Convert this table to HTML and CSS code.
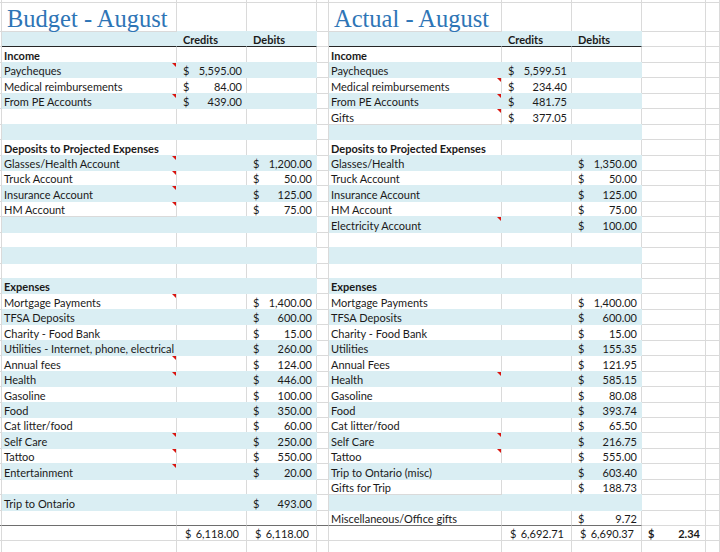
FILE: index.html
```html
<!DOCTYPE html>
<html>
<head>
<meta charset="utf-8">
<title>Budget - August</title>
<link rel="stylesheet" href="styles.css">
</head>
<body>
<div class="sheet">
  <div class="row top"><div class="c"></div><div class="c"></div><div class="c"></div><div class="c"></div><div class="c"></div><div class="c"></div><div class="c"></div><div class="c"></div><div class="c"></div><div class="c"></div></div>
  <div class="row ttl"><div class="c"></div><div class="c title">Budget - August</div><div class="c"></div><div class="c"></div><div class="c"></div><div class="c title">Actual - August</div><div class="c"></div><div class="c"></div><div class="c"></div><div class="c"></div></div>

  <div class="row band hdr"><div class="c"></div><div class="c"></div><div class="c hd">Credits</div><div class="c hd">Debits</div><div class="c"></div><div class="c"></div><div class="c hd">Credits</div><div class="c hd">Debits</div><div class="c"></div><div class="c"></div></div>
  <div class="row"><div class="c"></div><div class="c lab bold">Income</div><div class="c"></div><div class="c"></div><div class="c"></div><div class="c lab bold">Income</div><div class="c"></div><div class="c"></div><div class="c"></div><div class="c"></div></div>
  <div class="row band"><div class="c"></div><div class="c lab note">Paycheques</div><div class="c num"><span>$</span><span>5,595.00</span></div><div class="c"></div><div class="c"></div><div class="c lab">Paycheques</div><div class="c num"><span>$</span><span>5,599.51</span></div><div class="c"></div><div class="c"></div><div class="c"></div></div>
  <div class="row"><div class="c"></div><div class="c lab">Medical reimbursements</div><div class="c num"><span>$</span><span>84.00</span></div><div class="c"></div><div class="c"></div><div class="c lab note">Medical reimbursements</div><div class="c num"><span>$</span><span>234.40</span></div><div class="c"></div><div class="c"></div><div class="c"></div></div>
  <div class="row band"><div class="c"></div><div class="c lab note">From PE Accounts</div><div class="c num"><span>$</span><span>439.00</span></div><div class="c"></div><div class="c"></div><div class="c lab note">From PE Accounts</div><div class="c num"><span>$</span><span>481.75</span></div><div class="c"></div><div class="c"></div><div class="c"></div></div>
  <div class="row"><div class="c"></div><div class="c"></div><div class="c"></div><div class="c"></div><div class="c"></div><div class="c lab note">Gifts</div><div class="c num"><span>$</span><span>377.05</span></div><div class="c"></div><div class="c"></div><div class="c"></div></div>
  <div class="row band"><div class="c"></div><div class="c"></div><div class="c"></div><div class="c"></div><div class="c"></div><div class="c"></div><div class="c"></div><div class="c"></div><div class="c"></div><div class="c"></div></div>

  <div class="row"><div class="c"></div><div class="c lab bold">Deposits to Projected Expenses</div><div class="c"></div><div class="c"></div><div class="c"></div><div class="c lab bold">Deposits to Projected Expenses</div><div class="c"></div><div class="c"></div><div class="c"></div><div class="c"></div></div>
  <div class="row band"><div class="c"></div><div class="c lab note">Glasses/Health Account</div><div class="c"></div><div class="c num"><span>$</span><span>1,200.00</span></div><div class="c"></div><div class="c lab">Glasses/Health</div><div class="c"></div><div class="c num"><span>$</span><span>1,350.00</span></div><div class="c"></div><div class="c"></div></div>
  <div class="row"><div class="c"></div><div class="c lab note">Truck Account</div><div class="c"></div><div class="c num"><span>$</span><span>50.00</span></div><div class="c"></div><div class="c lab">Truck Account</div><div class="c"></div><div class="c num"><span>$</span><span>50.00</span></div><div class="c"></div><div class="c"></div></div>
  <div class="row band"><div class="c"></div><div class="c lab note">Insurance Account</div><div class="c"></div><div class="c num"><span>$</span><span>125.00</span></div><div class="c"></div><div class="c lab">Insurance Account</div><div class="c"></div><div class="c num"><span>$</span><span>125.00</span></div><div class="c"></div><div class="c"></div></div>
  <div class="row"><div class="c"></div><div class="c lab note">HM Account</div><div class="c"></div><div class="c num"><span>$</span><span>75.00</span></div><div class="c"></div><div class="c lab">HM Account</div><div class="c"></div><div class="c num"><span>$</span><span>75.00</span></div><div class="c"></div><div class="c"></div></div>
  <div class="row band"><div class="c"></div><div class="c"></div><div class="c"></div><div class="c"></div><div class="c"></div><div class="c lab note">Electricity Account</div><div class="c"></div><div class="c num"><span>$</span><span>100.00</span></div><div class="c"></div><div class="c"></div></div>
  <div class="row"><div class="c"></div><div class="c"></div><div class="c"></div><div class="c"></div><div class="c"></div><div class="c"></div><div class="c"></div><div class="c"></div><div class="c"></div><div class="c"></div></div>
  <div class="row band"><div class="c"></div><div class="c"></div><div class="c"></div><div class="c"></div><div class="c"></div><div class="c"></div><div class="c"></div><div class="c"></div><div class="c"></div><div class="c"></div></div>
  <div class="row"><div class="c"></div><div class="c"></div><div class="c"></div><div class="c"></div><div class="c"></div><div class="c"></div><div class="c"></div><div class="c"></div><div class="c"></div><div class="c"></div></div>

  <div class="row band"><div class="c"></div><div class="c lab bold">Expenses</div><div class="c"></div><div class="c"></div><div class="c"></div><div class="c lab bold">Expenses</div><div class="c"></div><div class="c"></div><div class="c"></div><div class="c"></div></div>
  <div class="row"><div class="c"></div><div class="c lab note">Mortgage Payments</div><div class="c"></div><div class="c num"><span>$</span><span>1,400.00</span></div><div class="c"></div><div class="c lab">Mortgage Payments</div><div class="c"></div><div class="c num"><span>$</span><span>1,400.00</span></div><div class="c"></div><div class="c"></div></div>
  <div class="row band"><div class="c"></div><div class="c lab">TFSA Deposits</div><div class="c"></div><div class="c num"><span>$</span><span>600.00</span></div><div class="c"></div><div class="c lab">TFSA Deposits</div><div class="c"></div><div class="c num"><span>$</span><span>600.00</span></div><div class="c"></div><div class="c"></div></div>
  <div class="row"><div class="c"></div><div class="c lab">Charity - Food Bank</div><div class="c"></div><div class="c num"><span>$</span><span>15.00</span></div><div class="c"></div><div class="c lab">Charity - Food Bank</div><div class="c"></div><div class="c num"><span>$</span><span>15.00</span></div><div class="c"></div><div class="c"></div></div>
  <div class="row band"><div class="c"></div><div class="c lab">Utilities - Internet, phone, electrical</div><div class="c"></div><div class="c num"><span>$</span><span>260.00</span></div><div class="c"></div><div class="c lab">Utilities</div><div class="c"></div><div class="c num"><span>$</span><span>155.35</span></div><div class="c"></div><div class="c"></div></div>
  <div class="row"><div class="c"></div><div class="c lab note">Annual fees</div><div class="c"></div><div class="c num"><span>$</span><span>124.00</span></div><div class="c"></div><div class="c lab">Annual Fees</div><div class="c"></div><div class="c num"><span>$</span><span>121.95</span></div><div class="c"></div><div class="c"></div></div>
  <div class="row band"><div class="c"></div><div class="c lab note">Health</div><div class="c"></div><div class="c num"><span>$</span><span>446.00</span></div><div class="c"></div><div class="c lab note">Health</div><div class="c"></div><div class="c num"><span>$</span><span>585.15</span></div><div class="c"></div><div class="c"></div></div>
  <div class="row"><div class="c"></div><div class="c lab">Gasoline</div><div class="c"></div><div class="c num"><span>$</span><span>100.00</span></div><div class="c"></div><div class="c lab">Gasoline</div><div class="c"></div><div class="c num"><span>$</span><span>80.08</span></div><div class="c"></div><div class="c"></div></div>
  <div class="row band"><div class="c"></div><div class="c lab">Food</div><div class="c"></div><div class="c num"><span>$</span><span>350.00</span></div><div class="c"></div><div class="c lab">Food</div><div class="c"></div><div class="c num"><span>$</span><span>393.74</span></div><div class="c"></div><div class="c"></div></div>
  <div class="row"><div class="c"></div><div class="c lab">Cat litter/food</div><div class="c"></div><div class="c num"><span>$</span><span>60.00</span></div><div class="c"></div><div class="c lab">Cat litter/food</div><div class="c"></div><div class="c num"><span>$</span><span>65.50</span></div><div class="c"></div><div class="c"></div></div>
  <div class="row band"><div class="c"></div><div class="c lab note">Self Care</div><div class="c"></div><div class="c num"><span>$</span><span>250.00</span></div><div class="c"></div><div class="c lab note">Self Care</div><div class="c"></div><div class="c num"><span>$</span><span>216.75</span></div><div class="c"></div><div class="c"></div></div>
  <div class="row"><div class="c"></div><div class="c lab note">Tattoo</div><div class="c"></div><div class="c num"><span>$</span><span>550.00</span></div><div class="c"></div><div class="c lab note">Tattoo</div><div class="c"></div><div class="c num"><span>$</span><span>555.00</span></div><div class="c"></div><div class="c"></div></div>
  <div class="row band"><div class="c"></div><div class="c lab note">Entertainment</div><div class="c"></div><div class="c num"><span>$</span><span>20.00</span></div><div class="c"></div><div class="c lab">Trip to Ontario (misc)</div><div class="c"></div><div class="c num"><span>$</span><span>603.40</span></div><div class="c"></div><div class="c"></div></div>
  <div class="row"><div class="c"></div><div class="c"></div><div class="c"></div><div class="c"></div><div class="c"></div><div class="c lab">Gifts for Trip</div><div class="c"></div><div class="c num"><span>$</span><span>188.73</span></div><div class="c"></div><div class="c"></div></div>
  <div class="row band"><div class="c"></div><div class="c lab">Trip to Ontario</div><div class="c"></div><div class="c num"><span>$</span><span>493.00</span></div><div class="c"></div><div class="c"></div><div class="c"></div><div class="c"></div><div class="c"></div><div class="c"></div></div>
  <div class="row last"><div class="c"></div><div class="c"></div><div class="c"></div><div class="c"></div><div class="c"></div><div class="c lab">Miscellaneous/Office gifts</div><div class="c"></div><div class="c num"><span>$</span><span>9.72</span></div><div class="c"></div><div class="c"></div></div>
  <div class="row"><div class="c"></div><div class="c"></div><div class="c tot"><span>$</span><span>6,118.00</span></div><div class="c tot"><span>$</span><span>6,118.00</span></div><div class="c"></div><div class="c"></div><div class="c tot"><span>$</span><span>6,692.71</span></div><div class="c tot"><span>$</span><span>6,690.37</span></div><div class="c num diff"><span>$</span><span>2.34</span></div><div class="c"></div></div>
  <div class="row"><div class="c"></div><div class="c"></div><div class="c"></div><div class="c"></div><div class="c"></div><div class="c"></div><div class="c"></div><div class="c"></div><div class="c"></div><div class="c"></div></div>
</div>
</body>
</html>
```

FILE: styles.css
```css
* {
  box-sizing: border-box;
  margin: 0;
  padding: 0;
}

body {
  margin: 0;
  background: #ffffff;
  font-family: Lato, "Noto Sans", sans-serif;
  font-size: 11px;
  color: #1a1a1a;
  width: 720px;
  overflow: hidden;
}

.sheet {
  width: 720px;
}

.row {
  display: grid;
  grid-template-columns: 2px 175px 70px 70px 12px 173px 70px 70px 64px 1fr;
  height: 15.44px;
}

.row.top {
  height: 3px;
}

.row.ttl {
  height: 29px;
}

.c {
  position: relative;
  display: flex;
  align-items: flex-end;
  min-width: 0;
  white-space: nowrap;
  line-height: 12px;
  padding-bottom: 0;
  border-right: 1px solid #dadada;
  border-bottom: 1px solid #dadada;
}

.band > .c:nth-child(n+2):nth-child(-n+4),
.band > .c:nth-child(n+6):nth-child(-n+8) {
  background: #daeef3;
  border-color: #daeef3;
  box-shadow: 0 -1px 0 #daeef3;
}

.hdr > .c:nth-child(n+2):nth-child(-n+4),
.hdr > .c:nth-child(n+6):nth-child(-n+8) {
  border-bottom-color: #262626;
}

.last > .c:nth-child(-n+8) {
  border-bottom-color: #6e6e6e;
}

.title {
  font-family: "Liberation Serif", serif;
  font-size: 24.5px;
  line-height: 24px;
  color: #2e75b6;
  padding-left: 5px;
  padding-bottom: 0;
  z-index: 1;
}

.hd {
  font-weight: 700;
  padding-left: 6px;
}

.lab {
  padding-left: 2px;
  z-index: 1;
}

.bold {
  font-weight: 700;
}

.note::after {
  content: "";
  position: absolute;
  top: 0;
  right: 0;
  border-top: 4px solid #d9140f;
  border-left: 4px solid transparent;
}

.num {
  justify-content: space-between;
  padding-left: 6px;
  padding-right: 4px;
}

.tot {
  justify-content: space-between;
  padding-left: 8px;
  padding-right: 7px;
}

.diff {
  font-weight: 700;
  padding-right: 5px;
}
```
